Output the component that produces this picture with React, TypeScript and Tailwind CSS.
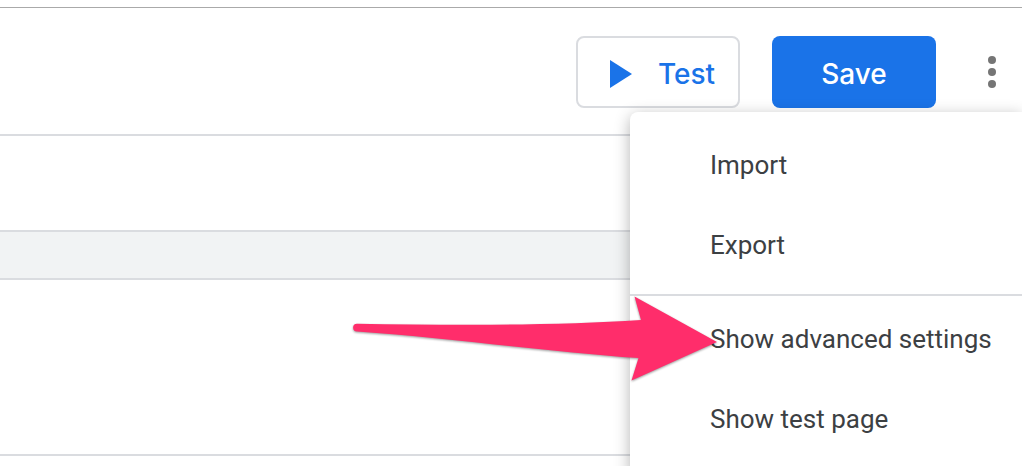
import { useState } from 'react';

const MENU_GROUPS = [
  ['Import', 'Export'],
  ['Show advanced settings', 'Show test page'],
];

function OverflowMenu() {
  return (
    <div
      role="menu"
      className="absolute top-[104px] right-0 z-10 w-[392px] rounded-tl-lg bg-white pb-4 shadow-[0_4px_16px_rgba(0,0,0,0.3)]"
    >
      {MENU_GROUPS.map((items, i) => (
        <div key={items[0]} className={i === 0 ? 'pt-[13px] pb-[9px]' : 'border-t-2 border-[#dadce0] pt-[3px]'}>
          {items.map(item => (
            <button
              key={item}
              type="button"
              role="menuitem"
              className="flex h-20 w-full items-center pl-20 text-left text-[26px] whitespace-nowrap text-[#3c4043] hover:bg-gray-100"
            >
              {item}
            </button>
          ))}
        </div>
      ))}
    </div>
  );
}

function Arrow() {
  return (
    <svg
      className="pointer-events-none absolute top-[290px] right-[302px] z-20"
      width="370"
      height="100"
      viewBox="350 290 370 100"
      aria-hidden="true"
    >
      <path
        className="drop-shadow-[0_1px_1px_rgba(0,0,0,0.4)]"
        fill="#ff2d6b"
        d="M357 323.7C460 325.5 560 325.5 641 320L634.5 296.5L717 342L631.5 380.5L638.5 358C550 352 450 338 357 331.5A3.9 3.9 0 0 1 357 323.7Z"
      />
    </svg>
  );
}

export default function App() {
  const [open, setOpen] = useState(true);

  return (
    <div className="relative min-h-screen overflow-hidden bg-white pt-[7px] font-['Roboto',sans-serif]">
      <header className="relative flex h-[129px] items-start justify-end border-t border-b-2 border-t-[#aaaaaa] border-b-[#dadce0] pt-7 pr-1.5">
        <div className="flex items-center gap-8 font-['Inter',sans-serif] text-[28px] font-medium">
          <button
            type="button"
            className="flex h-[72px] w-[164px] items-center gap-[26px] rounded-lg border-2 border-[#dadce0] pt-1 pl-8 text-[#1a73e8]"
          >
            <svg width="22" height="28" viewBox="0 0 22 28" fill="currentColor" aria-hidden="true">
              <path d="M0 0v28l22-14z" />
            </svg>
            Test
          </button>
          <button type="button" className="h-[72px] w-[164px] rounded-lg bg-[#1a73e8] pt-1 text-white">
            Save
          </button>
        </div>
        <button
          type="button"
          aria-label="More options"
          aria-expanded={open}
          onClick={() => setOpen(!open)}
          className="ml-8 flex h-[72px] w-12 items-center justify-center text-[#757575]"
        >
          <svg width="8" height="32" viewBox="0 0 8 32" fill="currentColor" aria-hidden="true">
            <circle cx="4" cy="4" r="4" />
            <circle cx="4" cy="16" r="4" />
            <circle cx="4" cy="28" r="4" />
          </svg>
        </button>
        {open && <OverflowMenu />}
      </header>

      <main>
        <div className="h-[94px]" />
        <div className="h-[50px] border-y-2 border-[#dadce0] bg-[#f1f3f4]" />
        <div className="h-[176px] border-b-2 border-[#dadce0]" />
      </main>

      <Arrow />
    </div>
  );
}
